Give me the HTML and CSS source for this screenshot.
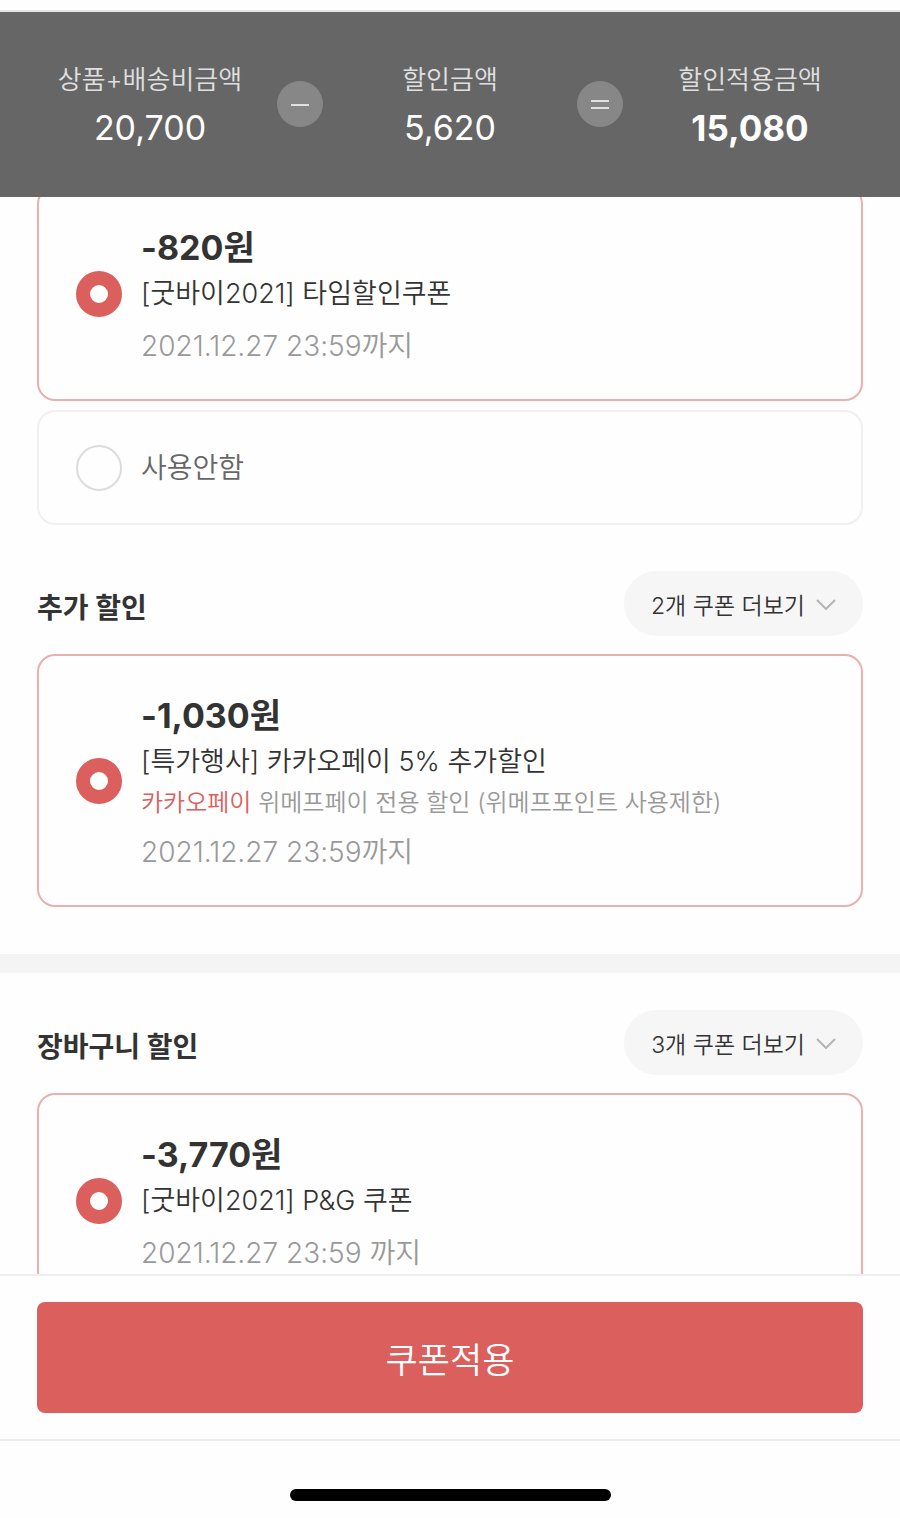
FILE: index.html
```html
<!DOCTYPE html>
<html lang="ko">
<head>
  <meta charset="UTF-8" />
  <meta name="viewport" content="width=device-width, initial-scale=1.0" />
  <title>쿠폰적용</title>
  <link rel="stylesheet" href="styles.css">
</head>
<body>
  <div class="app">
    <header class="summary">
      <div class="summary-item">
        <span class="summary-label">상품+배송비금액</span>
        <span class="summary-value">20,700</span>
      </div>
      <svg class="sign" viewBox="0 0 46 46" aria-label="minus">
        <circle cx="23" cy="23" r="23" fill="#878787" />
        <path d="M14 24h18" stroke="#e0e0e0" stroke-width="2" />
      </svg>
      <div class="summary-item">
        <span class="summary-label">할인금액</span>
        <span class="summary-value">5,620</span>
      </div>
      <svg class="sign" viewBox="0 0 46 46" aria-label="equals">
        <circle cx="23" cy="23" r="23" fill="#878787" />
        <path d="M14 20h18M14 27h18" stroke="#e0e0e0" stroke-width="2" />
      </svg>
      <div class="summary-item">
        <span class="summary-label">할인적용금액</span>
        <span class="summary-value total">15,080</span>
      </div>
    </header>

    <main class="list">
      <section class="section scrolled">
        <label class="coupon selected">
          <input type="radio" name="product" class="radio" checked />
          <span class="info">
            <strong class="amount">-820원</strong>
            <span class="name">[굿바이2021] 타임할인쿠폰</span>
            <span class="date">2021.12.27 23:59까지</span>
          </span>
        </label>
        <label class="coupon none">
          <input type="radio" name="product" class="radio" />
          <span class="none-text">사용안함</span>
        </label>
      </section>

      <section class="section extra">
        <div class="section-head">
          <h2>추가 할인</h2>
          <button type="button" class="more">2개 쿠폰 더보기
            <svg class="chevron" viewBox="0 0 20 12"><path d="M1 2l9 9 9-9" /></svg>
          </button>
        </div>
        <label class="coupon selected">
          <input type="radio" name="extra" class="radio" checked />
          <span class="info">
            <strong class="amount">-1,030원</strong>
            <span class="name">[특가행사] 카카오페이 5% 추가할인</span>
            <span class="note"><em>카카오페이</em> 위메프페이 전용 할인 (위메프포인트 사용제한)</span>
            <span class="date">2021.12.27 23:59까지</span>
          </span>
        </label>
      </section>

      <section class="section cart">
        <div class="section-head">
          <h2>장바구니 할인</h2>
          <button type="button" class="more">3개 쿠폰 더보기
            <svg class="chevron" viewBox="0 0 20 12"><path d="M1 2l9 9 9-9" /></svg>
          </button>
        </div>
        <label class="coupon selected">
          <input type="radio" name="cart" class="radio" checked />
          <span class="info">
            <strong class="amount">-3,770원</strong>
            <span class="name">[굿바이2021] P&amp;G 쿠폰</span>
            <span class="date">2021.12.27 23:59 까지</span>
          </span>
        </label>
      </section>
    </main>

    <footer class="footer">
      <button type="submit" class="apply">쿠폰적용</button>
    </footer>
    <div class="home"><span class="home-bar"></span></div>
  </div>
</body>
</html>
```
FILE: styles.css
```css
* {
  box-sizing: border-box;
}

body {
  margin: 0;
  background: #fefefe;
  color: #333;
  font-family: Inter, "Noto Sans CJK KR", sans-serif;
  font-weight: 350;
}

button {
  border: none;
  font-family: inherit;
  font-weight: inherit;
  cursor: pointer;
}

.app {
  display: flex;
  flex-direction: column;
  height: 100vh;
  padding-top: 10px;
}

/* price summary */
.summary {
  display: flex;
  align-items: center;
  flex-shrink: 0;
  padding: 44px 0 45px;
  border-top: 2px solid #e4e4e4;
  background: #666;
  color: #fff;
}

.summary-item {
  flex: 1;
  display: flex;
  flex-direction: column;
  align-items: center;
}

.summary-label {
  font-size: 26px;
  line-height: 48px;
  color: #e0e0e0;
}

.summary-value {
  font-size: 34px;
  font-weight: 400;
  line-height: 48px;
}

.total {
  font-size: 35px;
  font-weight: 700;
}

.sign {
  width: 46px;
  height: 46px;
  margin: 0 -23px;
}

/* coupon list */
.list {
  flex: 1;
  min-height: 0;
  overflow: hidden;
}

.section {
  padding: 0 37px;
}

.scrolled {
  margin-top: -11px;
}

.extra {
  padding-top: 46px;
  padding-bottom: 47px;
  border-bottom: 19px solid #f4f4f4;
}

.cart {
  padding-top: 37px;
}

.section-head {
  display: flex;
  justify-content: space-between;
  align-items: center;
  margin-bottom: 18px;
}

h2 {
  margin: 0;
  padding-top: 4px;
  font-size: 28px;
  font-weight: 700;
}

.more {
  display: flex;
  align-items: center;
  gap: 11px;
  height: 65px;
  padding: 0 27px;
  border-radius: 33px;
  background: #f6f6f6;
  color: #333;
  font-size: 23px;
}

.chevron {
  width: 20px;
  height: 12px;
  fill: none;
  stroke: #b4b4b4;
  stroke-width: 2;
}

.coupon {
  display: flex;
  align-items: center;
  gap: 19px;
  padding: 32px 37px;
  border: 2px solid #f0f0f0;
  border-radius: 18px;
}

.selected {
  border-color: #e8b0b0;
}

.none {
  margin-top: 9px;
  padding: 33px 37px 32px;
}

.radio {
  appearance: none;
  flex-shrink: 0;
  width: 46px;
  height: 46px;
  margin: 0;
  border: 2px solid #dcdcdc;
  border-radius: 50%;
}

.radio:checked {
  border: 14px solid #db5f5c;
  background: #fff;
}

.info {
  display: flex;
  flex-direction: column;
  padding-top: 4px;
}

.amount {
  font-size: 34px;
  line-height: 48px;
}

.name {
  font-size: 27px;
  line-height: 44px;
}

.note {
  font-size: 24px;
  line-height: 38px;
  color: #999;
}

.note em {
  font-style: normal;
  color: #db5f5c;
}

.date {
  margin-top: 9px;
  font-size: 28px;
  line-height: 42px;
  color: #999;
}

.none-text {
  font-size: 28px;
  line-height: 46px;
  color: #666;
}

/* bottom button */
.footer {
  flex-shrink: 0;
  padding: 26px 37px;
  border-top: 2px solid #eee;
  border-bottom: 2px solid #eee;
}

.apply {
  width: 100%;
  height: 111px;
  border-radius: 8px;
  background: #db5f5c;
  color: #fff;
  font-size: 35px;
}

.home {
  display: flex;
  justify-content: center;
  flex-shrink: 0;
  padding: 48px 0 17px;
}

.home-bar {
  width: 321px;
  height: 12px;
  border-radius: 6px;
  background: #000;
}
```
